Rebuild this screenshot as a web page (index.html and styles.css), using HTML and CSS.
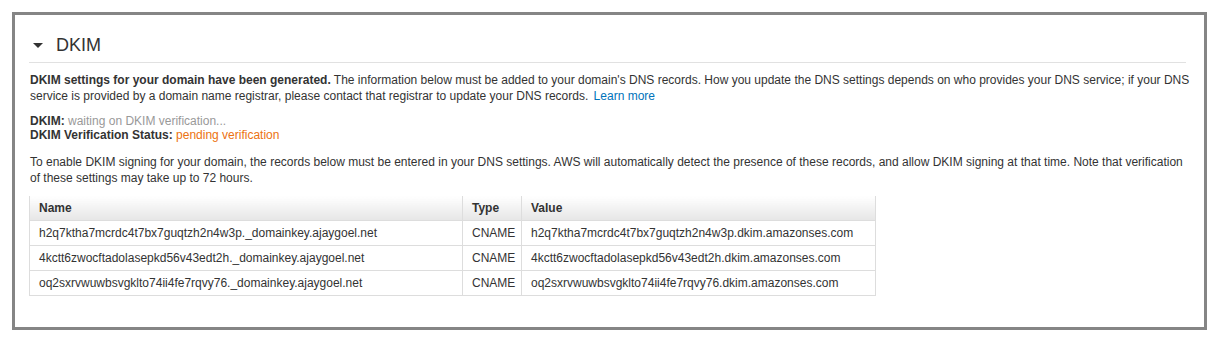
FILE: index.html
```html
<!DOCTYPE html>
<html lang="en">
<head>
    <meta charset="UTF-8">
    <meta name="viewport" content="width=device-width, initial-scale=1.0">
    <title>DKIM</title>
    <link rel="stylesheet" href="styles.css">
</head>
<body>
    <div class="panel">
        <div class="section-header">
            <span class="caret"></span>
            <span class="section-title">DKIM</span>
        </div>

        <p class="intro">
            <strong>DKIM settings for your domain have been generated.</strong> The information below must be added to your domain's DNS records. How you update the DNS settings depends on who provides your DNS service; if your DNS service is provided by a domain name registrar, please contact that registrar to update your DNS records. <a href="#" class="link">Learn more</a>
        </p>

        <div class="status">
            <div><strong>DKIM:</strong> <span class="muted">waiting on DKIM verification...</span></div>
            <div><strong>DKIM Verification Status:</strong> <span class="pending">pending verification</span></div>
        </div>

        <p class="note">
            To enable DKIM signing for your domain, the records below must be entered in your DNS settings. AWS will automatically detect the presence of these records, and allow DKIM signing at that time. Note that verification of these settings may take up to 72 hours.
        </p>

        <table class="records">
            <thead>
                <tr>
                    <th class="col-name">Name</th>
                    <th class="col-type">Type</th>
                    <th class="col-value">Value</th>
                </tr>
            </thead>
            <tbody>
                <tr>
                    <td>h2q7ktha7mcrdc4t7bx7guqtzh2n4w3p._domainkey.ajaygoel.net</td>
                    <td>CNAME</td>
                    <td>h2q7ktha7mcrdc4t7bx7guqtzh2n4w3p.dkim.amazonses.com</td>
                </tr>
                <tr>
                    <td>4kctt6zwocftadolasepkd56v43edt2h._domainkey.ajaygoel.net</td>
                    <td>CNAME</td>
                    <td>4kctt6zwocftadolasepkd56v43edt2h.dkim.amazonses.com</td>
                </tr>
                <tr>
                    <td>oq2sxrvwuwbsvgklto74ii4fe7rqvy76._domainkey.ajaygoel.net</td>
                    <td>CNAME</td>
                    <td>oq2sxrvwuwbsvgklto74ii4fe7rqvy76.dkim.amazonses.com</td>
                </tr>
            </tbody>
        </table>
    </div>
</body>
</html>
```

FILE: styles.css
```css
body {
    margin: 0;
    padding: 12px;
    background: #ffffff;
    font-family: 'Liberation Sans', Arial, sans-serif;
    font-size: 12px;
    color: #333333;
}

.panel {
    box-sizing: border-box;
    width: 1195px;
    height: 318px;
    border: 3px solid #858585;
    padding: 14px 18px 0 14px;
}

.section-header {
    display: flex;
    align-items: center;
    height: 32px;
    padding-bottom: 1px;
    border-bottom: 1px solid #e1e1e1;
}

.caret {
    width: 0;
    height: 0;
    margin-left: 4px;
    margin-right: 13px;
    border-left: 5px solid transparent;
    border-right: 5px solid transparent;
    border-top: 5px solid #333333;
}

.section-title {
    font-size: 18px;
    color: #333333;
}

.intro {
    margin: 9px -10px 0 1px;
    line-height: 16px;
}

.link {
    color: #0073bb;
    text-decoration: none;
    margin-left: 2px;
}

.status {
    margin: 10px 0 0 1px;
    line-height: 14px;
}

.muted {
    color: #999999;
}

.pending {
    color: #ec7211;
}

.note {
    margin: 12px 0 0 1px;
    line-height: 16px;
}

.records {
    margin-top: 10px;
    border-collapse: collapse;
    table-layout: fixed;
    width: 847px;
}

.records th,
.records td {
    text-align: left;
    height: 24px;
    padding: 0 9px;
    border: 1px solid #dddddd;
}

.records th {
    border-top: none;
    font-weight: bold;
    background: linear-gradient(to bottom, #ffffff, #e6e6e6);
}

.col-name {
    width: 414px;
}

.col-type {
    width: 40px;
}
```
